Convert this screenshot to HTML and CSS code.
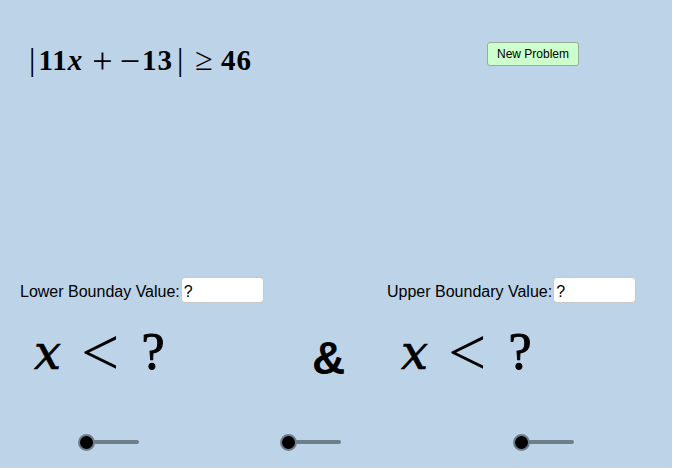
FILE: index.html
```html
<!DOCTYPE html>
<html>
<head>
<meta charset="utf-8">
<link rel="stylesheet" href="styles.css">
</head>
<body>
<div class="canvas">
  <div class="formula"><span class="bar">|</span><span class="num">11</span><i>x</i><span class="op">+</span><span class="minus">−</span><span class="num">13</span><span class="bar rbar">|</span><span class="rel">≥</span><span class="num">46</span></div>
  <button class="btn">New Problem</button>

  <div class="field lower"><span class="lbl">Lower Bounday Value:</span><span class="inp">?</span></div>
  <div class="field upper"><span class="lbl">Upper Boundary Value:</span><span class="inp">?</span></div>

  <div class="ineq left"><i>x</i><span class="lt">&lt;</span><span class="q">?</span></div>
  <div class="amp">&amp;</div>
  <div class="ineq right"><i>x</i><span class="lt">&lt;</span><span class="q">?</span></div>

  <div class="slider s1"><span class="track"></span><span class="thumb"></span></div>
  <div class="slider s2"><span class="track"></span><span class="thumb"></span></div>
  <div class="slider s3"><span class="track"></span><span class="thumb"></span></div>
</div>
</body>
</html>
```
FILE: styles.css
```css
html, body {
  margin: 0;
  padding: 0;
  background: #ffffff;
}
.canvas {
  position: relative;
  width: 672px;
  height: 468px;
  background: #bdd3e7;
  overflow: hidden;
  font-family: "Liberation Sans", Arial, sans-serif;
  color: #000;
}
.formula {
  position: absolute;
  left: 28px;
  top: 38px;
  display: flex;
  align-items: baseline;
  font-family: "Liberation Serif", "Times New Roman", serif;
  font-size: 29px;
  line-height: 40px;
  white-space: nowrap;
}
.formula .num {
  font-weight: bold;
  letter-spacing: 1px;
}
.formula .bar {
  font-size: 32px;
  margin: 0 3px 0 1px;
}
.formula .rbar {
  margin: 0 0 0 4px;
}
.formula i {
  font-weight: bold;
}
.formula .op {
  font-size: 36px;
  margin: 0 7px 0 10px;
  position: relative;
  top: 3px;
}
.formula .minus {
  font-size: 36px;
  margin-right: 2px;
  position: relative;
  top: 3px;
}
.formula .rel {
  font-size: 32px;
  margin: 0 8px 0 12px;
}
.btn {
  position: absolute;
  left: 487px;
  top: 42px;
  width: 92px;
  height: 24px;
  padding: 0;
  margin: 0;
  background: #ccffcc;
  border: 1px solid #9aaa9a;
  border-radius: 3px;
  font-family: "Liberation Sans", Arial, sans-serif;
  font-size: 12px;
  color: #000;
}
.field {
  position: absolute;
  top: 277px;
  display: flex;
  align-items: center;
  height: 26px;
}
.lower { left: 20px; }
.upper { left: 387px; }
.lbl {
  font-size: 16px;
  padding-top: 3px;
  white-space: nowrap;
}
.inp {
  box-sizing: border-box;
  width: 83px;
  height: 26px;
  margin-left: 1px;
  background: #fff;
  border: 1px solid #c8c8c8;
  border-radius: 4px;
  font-size: 16px;
  padding: 5px 0 0 2px;
}
.ineq {
  position: absolute;
  top: 311px;
  height: 70px;
  display: flex;
  align-items: baseline;
  font-family: "Liberation Serif", "Times New Roman", serif;
  line-height: 70px;
  white-space: nowrap;
}
.left { left: 34px; }
.right { left: 401px; }
.ineq i {
  font-family: "DejaVu Serif", serif;
  font-size: 48px;
  -webkit-text-stroke: 0.6px #000;
}
.ineq .lt {
  margin-left: 20px;
  font-size: 68px;
  position: relative;
  top: 6px;
}
.ineq .q {
  margin-left: 22px;
  font-size: 52px;
  -webkit-text-stroke: 1px #000;
}
.amp {
  position: absolute;
  left: 312px;
  top: 333px;
  font-family: "Liberation Sans", Arial, sans-serif;
  font-weight: bold;
  font-size: 46px;
  line-height: 50px;
}
.slider {
  position: absolute;
  top: 434px;
  width: 62px;
  height: 16px;
}
.s1 { left: 78px; }
.s2 { left: 280px; }
.s3 { left: 513px; }
.track {
  position: absolute;
  left: 8px;
  top: 6px;
  width: 53px;
  height: 4px;
  border-radius: 2px;
  background: #6f7e8b;
}
.thumb {
  position: absolute;
  left: 0;
  top: 0;
  box-sizing: border-box;
  width: 17px;
  height: 17px;
  border-radius: 50%;
  background: #000;
  border: 2px solid #6f7e8b;
}
```
